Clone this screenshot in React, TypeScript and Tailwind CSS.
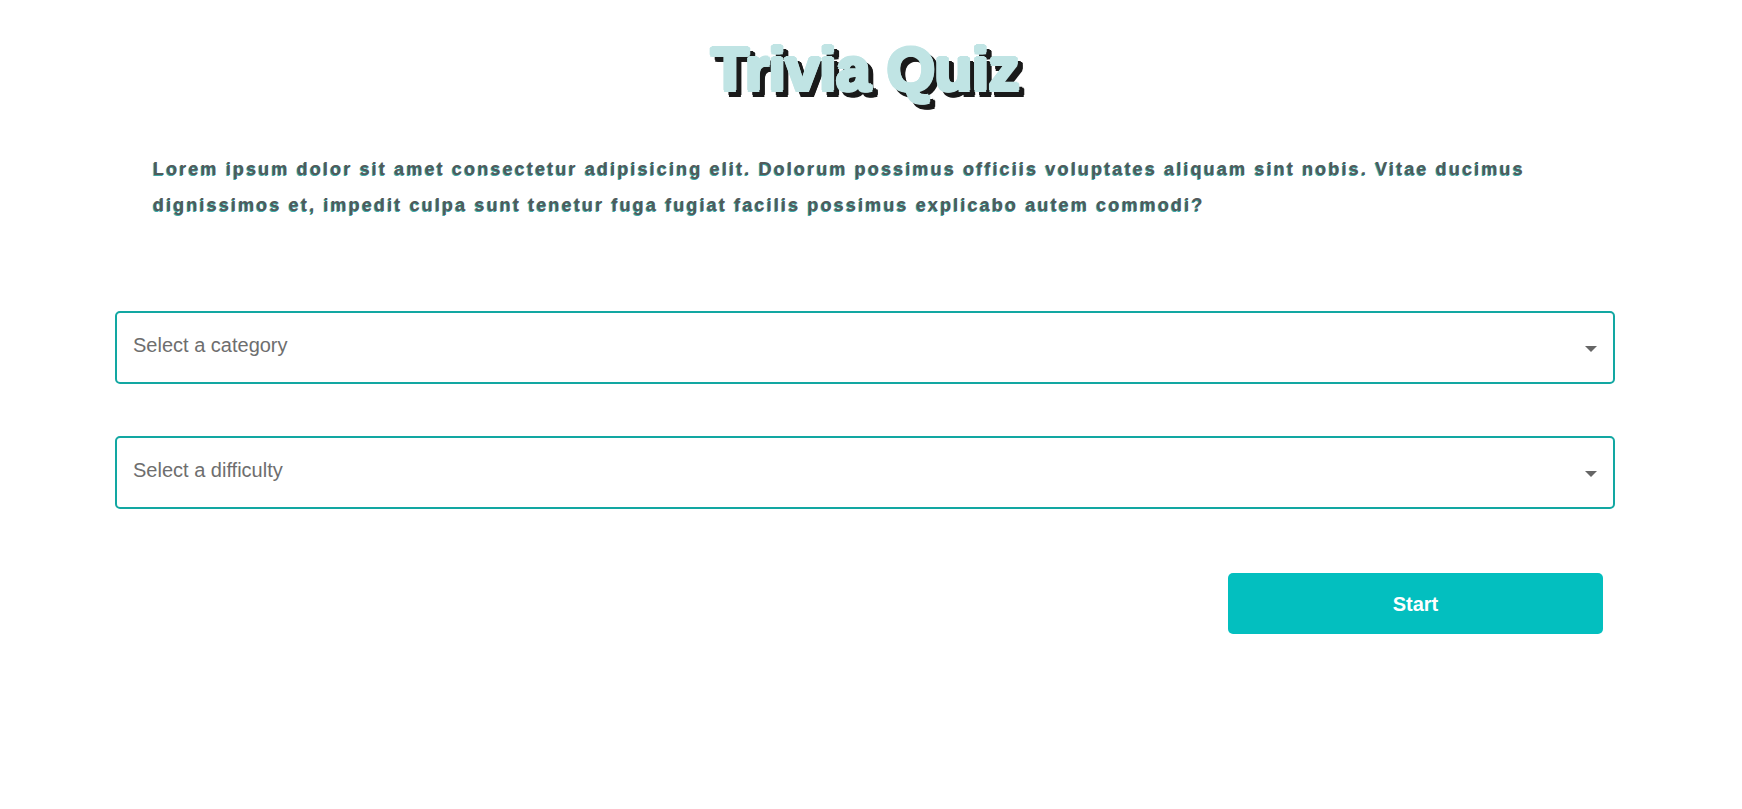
import React from 'react';

const SelectBox = ({ placeholder }: { placeholder: string }) => (
  <div className="flex h-[73px] w-full items-center justify-between rounded-[5px] border-2 border-[#12a7a2] bg-white pl-4 pr-4">
    <span className="-mt-[6px] text-[20px] text-[#6e6e6e]">{placeholder}</span>
    <svg width="12" height="6" viewBox="0 0 12 6" className="mt-[3px]">
      <path d="M0 0 L12 0 L6 6 Z" fill="#666666" />
    </svg>
  </div>
);

export default function App() {
  return (
    <div className="min-h-screen bg-white font-['Liberation_Sans',Arial,sans-serif]">
      <div className="flex w-[1730px] flex-col px-[115px] pt-[33px]">
        {/* heavy title: light outline ring on top, black ring offset below */}
        <h1 className="text-center text-[62px] font-bold leading-[71px] tracking-[-0.5px] text-[#c0e4e4] [text-shadow:2px_0_0_#c0e4e4,-2px_0_0_#c0e4e4,0_2px_0_#c0e4e4,0_-2px_0_#c0e4e4,1.5px_1.5px_0_#c0e4e4,-1.5px_-1.5px_0_#c0e4e4,1.5px_-1.5px_0_#c0e4e4,-1.5px_1.5px_0_#c0e4e4,5px_5px_0_#1a1a1a,7px_5px_0_#1a1a1a,3px_5px_0_#1a1a1a,5px_7px_0_#1a1a1a,5px_3px_0_#1a1a1a,6.5px_6.5px_0_#1a1a1a,3.5px_3.5px_0_#1a1a1a,6.5px_3.5px_0_#1a1a1a,3.5px_6.5px_0_#1a1a1a]">
          Trivia Quiz
        </h1>

        <p className="mt-[47px] px-[38px] text-[18px] font-bold leading-[36px] tracking-[2.15px] text-[#525a5a] [text-shadow:-1px_1px_0_#3aa8a8]">
          Lorem ipsum dolor sit amet consectetur adipisicing elit. Dolorum possimus officiis voluptates aliquam sint nobis. Vitae ducimus dignissimos et, impedit culpa sunt tenetur fuga fugiat facilis possimus explicabo autem commodi?
        </p>

        <div className="mt-[88px] flex flex-col gap-[52px]">
          <SelectBox placeholder="Select a category" />
          <SelectBox placeholder="Select a difficulty" />
        </div>

        <div className="mt-[64px] flex justify-end pr-[12px]">
          <button className="h-[61px] w-[375px] rounded-[5px] bg-[#03bfbf] text-[20px] font-bold text-white">
            Start
          </button>
        </div>
      </div>
    </div>
  );
}
